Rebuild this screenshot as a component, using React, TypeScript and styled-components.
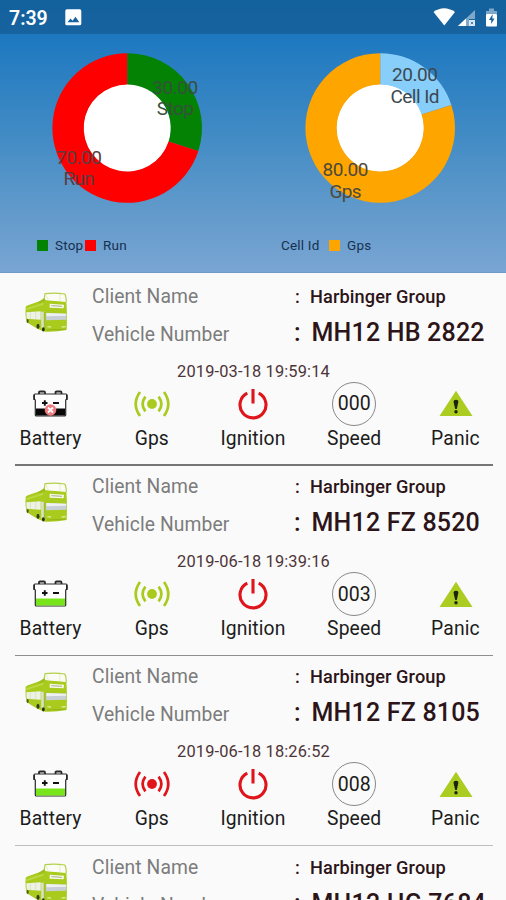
import React from "react";
import styled, { createGlobalStyle } from "styled-components";

const GlobalStyle = createGlobalStyle`
  * { box-sizing: border-box; }
  html, body { margin: 0; padding: 0; background: #fafafa; }
  body { font-family: Roboto, "Liberation Sans", sans-serif; overflow: hidden; }
  svg { display: block; }
`;

const Screen = styled.div`
  width: 506px;
  height: 900px;
  overflow: hidden;
  background: #fafafa;
`;

const StatusBar = styled.header`
  display: flex;
  align-items: center;
  height: 34px;
  padding: 0 8px 0 9px;
  background: linear-gradient(#13619c, #1763a0);
  color: #fff;
`;

const Clock = styled.span`
  width: 56px;
  font-size: 19.5px;
  font-weight: 600;
  line-height: 34px;
  padding-top: 3px;
`;

const StatusIcons = styled.div`
  display: flex;
  margin-left: auto;
`;

const Overview = styled.section`
  display: flex;
  height: 239px;
  background: linear-gradient(#1d78c0, #3d89c4 38%, #5d98ca 70%, #79a5d3);
  border-bottom: 1px solid #6c9cc6;
`;

const ChartPanel = styled.div`
  width: 253px;
`;

const Legend = styled.div<{ $inset: number }>`
  display: flex;
  align-items: center;
  height: 16px;
  margin-top: 3px;
  padding-left: ${(p) => p.$inset}px;
`;

const Swatch = styled.i<{ $color: string; $before: number }>`
  width: 11px;
  height: 11px;
  margin: 0 7px 0 ${(p) => p.$before}px;
  background: ${(p) => p.$color};
`;

const LegendLabel = styled.span<{ $width: number }>`
  width: ${(p) => p.$width}px;
  font-size: 13.5px;
  line-height: 16px;
  letter-spacing: 0.2px;
  white-space: nowrap;
  color: #16304e;
`;

const List = styled.main`
  padding-top: 2.7px;
`;

const Card = styled.article`
  height: 190.33px;
`;

const Info = styled.div`
  display: grid;
  grid-template-columns: 92px 202px 1fr;
  grid-template-rows: 34px 40px;
  padding-top: 4px;
`;

const BusCell = styled.div`
  grid-row: 1 / 3;
  padding: 12px 0 0 25px;
`;

const Field = styled.span<{ $lift?: number }>`
  font-size: 19.3px;
  font-weight: 400;
  line-height: 34px;
  letter-spacing: 0.1px;
  color: #7c7c7c;
  white-space: nowrap;
  padding-top: ${(p) => p.$lift ?? 0}px;
`;

const ClientValue = styled.div`
  display: flex;
  font-size: 18.2px;
  font-weight: 500;
  line-height: 34px;
  letter-spacing: 0.1px;
  color: #2c1418;
  white-space: nowrap;
`;

const VehicleValue = styled(ClientValue)`
  font-size: 25px;
  line-height: 38px;
  letter-spacing: 0.2px;
`;

const Colon = styled.span<{ $offset: number; $width: number }>`
  width: ${(p) => p.$width}px;
  padding-left: ${(p) => p.$offset}px;
`;

const Timestamp = styled.time`
  display: block;
  padding: 8px 0 0 1px;
  font-size: 16.4px;
  line-height: 20px;
  letter-spacing: 0.15px;
  text-align: center;
  color: #4d3438;
`;

const Metrics = styled.div`
  display: grid;
  grid-template-columns: repeat(5, 1fr);
`;

const Metric = styled.div`
  display: flex;
  flex-direction: column;
  align-items: center;
`;

const IconSlot = styled.div`
  display: flex;
  align-items: center;
  justify-content: center;
  height: 44px;
`;

const MetricLabel = styled.span`
  font-size: 19.3px;
  line-height: 26px;
  letter-spacing: 0.12px;
  color: #1c1c1c;
`;

const SpeedDial = styled.div`
  display: flex;
  align-items: center;
  justify-content: center;
  width: 44px;
  height: 44px;
  border: 1px solid #888;
  border-radius: 50%;
  font-size: 19.5px;
  color: #1c1c1c;
`;

const Divider = styled.hr<{ $color: string }>`
  height: 1.4px;
  margin: 12.5px 13px 0 15px;
  border: 0;
  background: ${(p) => p.$color};
`;

type Slice = {
  value: number;
  label: string;
  color: string;
  x: number;
  y: number;
  labelWidth: number;
  tint: string;
};

const CX = 127.2;
const CY = 94;

function slicePath(from: number, to: number) {
  const point = (fraction: number, r: number) => {
    const a = fraction * 2 * Math.PI;
    return `${CX + r * Math.sin(a)} ${CY - r * Math.cos(a)}`;
  };
  const large = to - from > 0.5 ? 1 : 0;
  return `M${point(from, 74.8)}A74.8 74.8 0 ${large} 1 ${point(to, 74.8)}L${point(to, 43.5)}A43.5 43.5 0 ${large} 0 ${point(from, 43.5)}Z`;
}

function Donut({ slices }: { slices: Slice[] }) {
  let start = 0;
  const arcs = slices.map((s) => {
    const from = start;
    start += s.value / 100;
    return <path key={s.label} d={slicePath(from, start)} fill={s.color} />;
  });
  return (
    <svg width="253" height="200" viewBox="0 0 253 200">
      <circle cx={CX} cy={CY} r="44" fill="#fff" />
      {arcs}
      {slices.map((s) => (
        <g key={s.label} fill={s.tint} fontSize="19" textAnchor="middle">
          <text x={s.x} y={s.y} textLength="46">{s.value.toFixed(2)}</text>
          <text x={s.x} y={s.y + 21.5} textLength={s.labelWidth}>{s.label}</text>
        </g>
      ))}
    </svg>
  );
}

function Bus() {
  return (
    <svg width="43" height="40" viewBox="75 48 129 120">
      <path d="M77 93Q78 90 84 88L131 71L199 76Q202 110 200 162Q170 168 137 167L128 165L112 158L80 139Q75 120 77 93Z" fill="#a9cb1d" />
      <path d="M132 72L135 53Q165 49 194 54Q198 58 199 78" fill="#fbfcf6" stroke="#b4d04a" strokeWidth="3.5" />
      <path d="M138 57L146 74M179 54L180 75" stroke="#dbe7b0" strokeWidth="2" />
      <path d="M112 80L133 66L137 74L120 82Z" fill="#9cbf1c" />
      <path d="M79 97L130 80V86L79 103Z" fill="#bcd944" />
      <path d="M149 83L192 86L191 97L149 95Z" fill="#f6f8ec" />
      <path d="M154 89L186 91" stroke="#98a26c" strokeWidth="2.5" />
      <path d="M79 109L122 106V131L80 128Z" fill="#eef2e6" />
      <path d="M91 108V129M107 107V130" stroke="#d2dfa4" strokeWidth="2" />
      <path d="M123 107L134 107V161L124 157Z" fill="#d9e2bd" />
      <path d="M133 108V163" stroke="#8aab20" strokeWidth="2.5" />
      <path d="M139 111L199 113V131L138 133Z" fill="#c9cfd6" />
      <path d="M139 111L199 113L198 119L139 121Z" fill="#eef0f3" />
      <path d="M142 152L153 153M185 153L197 152" stroke="#dcec8f" strokeWidth="4" />
      <path d="M141 162L197 160" stroke="#8fb117" strokeWidth="2.5" />
      <ellipse cx="114" cy="151" rx="4.5" ry="8" fill="#333b19" />
      <ellipse cx="83" cy="135" rx="3" ry="6" fill="#4c5623" />
      <ellipse cx="130" cy="160" rx="4" ry="6.5" fill="#252c14" />
    </svg>
  );
}

function BatteryIcon({ charged }: { charged: boolean }) {
  return (
    <svg width="35" height="28" viewBox="0 0 35 28">
      <path d="M6 4V2.4Q6 1.5 7 1.5H11Q12 1.5 12 2.4V4M22.5 4V2.4Q22.5 1.5 23.5 1.5H27.5Q28.5 1.5 28.5 2.4V4" fill="none" stroke="#292929" strokeWidth="1.8" />
      <path d="M2 4H33Q34 4 34 5V9L32.7 10V25Q32.7 26 31.5 26H3.5Q2.3 26 2.3 25V10L1 9V5Q1 4 2 4Z" fill="#fff" stroke="#292929" strokeWidth="1.2" />
      <path d="M1.2 10V5M33.8 10V5" stroke="#1d1d1d" strokeWidth="1.4" />
      <rect x="3" y="18.5" width="29" height="7" fill={charged ? "#78e51b" : "#080808"} />
      <path d="M9 13H14.5M11.8 10.3V15.7M20 13H26" stroke="#111" strokeWidth="1.9" />
      {!charged && (
        <>
          <circle cx="17.5" cy="20" r="5.8" fill="#f07b7f" />
          <path d="M15 17.5L20 22.5M20 17.5L15 22.5" stroke="#fff" strokeWidth="1.8" />
        </>
      )}
    </svg>
  );
}

function GpsIcon({ color }: { color: string }) {
  return (
    <svg width="36" height="28" viewBox="0 0 36 28" fill="none" stroke={color} strokeWidth="2.7">
      <circle cx="18" cy="14" r="4.9" fill={color} stroke="none" />
      <path d="M11.4 6.6Q5.8 14 11.4 21.4M24.6 6.6Q30.2 14 24.6 21.4M6 2Q-2.6 14 6 26M30 2Q38.6 14 30 26" />
    </svg>
  );
}

function PowerIcon() {
  return (
    <svg width="30" height="32" viewBox="0 0 30 32" fill="none" stroke="#e0141b" strokeWidth="3.1">
      <path d="M9.3 5.2A13 13 0 1 0 20.7 5.2M15 1V15.5" />
    </svg>
  );
}

function PanicIcon() {
  return (
    <svg width="35" height="27" viewBox="-0.5 0 34 27">
      <path d="M17 0.7L33.5 26H0.5Z" fill="#abcc20" />
      <path d="M14.5 11.7Q14.5 9.8 17 9.8Q19.5 9.8 19.3 12L17.8 19H16.2Z" fill="#1d230b" />
      <circle cx="17" cy="21.7" r="1.7" fill="#1d230b" />
    </svg>
  );
}

const fleet = [
  { plate: "MH12 HB 2822", time: "2019-03-18 19:59:14", charged: false, gps: "#a9cb1d", speed: "000", line: "#757575" },
  { plate: "MH12 FZ 8520", time: "2019-06-18 19:39:16", charged: true, gps: "#a9cb1d", speed: "003", line: "#8e8e8e" },
  { plate: "MH12 FZ 8105", time: "2019-06-18 18:26:52", charged: true, gps: "#e0141b", speed: "008", line: "#bdbdbd" },
  { plate: "MH12 HG 7684", time: "2019-06-18 18:20:31", charged: true, gps: "#a9cb1d", speed: "000", line: "#8e8e8e" },
];

const motion: Slice[] = [
  { value: 30, label: "Stop", color: "#048204", x: 175.3, y: 59.5, labelWidth: 37, tint: "#35513c" },
  { value: 70, label: "Run", color: "#ff0000", x: 79, y: 129.5, labelWidth: 31, tint: "#5c3b43" },
];

const source: Slice[] = [
  { value: 20, label: "Cell Id", color: "#87cefa", x: 162, y: 47, labelWidth: 49, tint: "#3c4850" },
  { value: 80, label: "Gps", color: "#ffa500", x: 92.5, y: 142, labelWidth: 32, tint: "#4e493b" },
];

export default function App() {
  return (
    <Screen>
      <GlobalStyle />
      <StatusBar>
        <Clock>7:39</Clock>
        <svg width="17" height="17" viewBox="0 0 17 17">
          <rect x="0.3" y="0.3" width="16" height="16" rx="1.6" fill="#fff" />
          <path d="M2.5 13.3L5.5 9.5L7.5 11.8L10.5 7.8L14.3 13.3Z" fill="#1763a0" />
        </svg>
        <StatusIcons>
          <svg width="65" height="20" viewBox="0 0 65 20">
            <path d="M0.5 5Q11 -2.5 22 5L11.3 18.5Z" fill="#fff" />
            <path d="M25 19L42 3V12H36V19Z" fill="#fff" opacity="0.45" />
            <path d="M25 19L33 11.5V19Z" fill="#fff" />
            <path d="M36 13H42V19H36Z" fill="#dce9f4" />
            <path d="M37.8 14.8L40.2 17.2M40.2 14.8L37.8 17.2" stroke="#4e82b0" strokeWidth="1" />
            <path d="M53 7V4H56V1.5H61V4H64V7Z" fill="#fff" opacity="0.45" />
            <rect x="53" y="7" width="11" height="12.5" rx="1" fill="#fff" />
            <path d="M59.7 7L56 13H58.2V17L61.5 11.5H59.3Z" fill="#1763a0" />
          </svg>
        </StatusIcons>
      </StatusBar>
      <Overview>
        <ChartPanel>
          <Donut slices={motion} />
          <Legend $inset={37}>
            <Swatch $color="#048204" $before={0} />
            <LegendLabel $width={30}>Stop</LegendLabel>
            <Swatch $color="#ff0000" $before={0} />
            <LegendLabel $width={26}>Run</LegendLabel>
          </Legend>
        </ChartPanel>
        <ChartPanel>
          <Donut slices={source} />
          <Legend $inset={28}>
            <LegendLabel $width={40}>Cell Id</LegendLabel>
            <Swatch $color="#ffa500" $before={8} />
            <LegendLabel $width={26}>Gps</LegendLabel>
          </Legend>
        </ChartPanel>
      </Overview>
      <List>
        {fleet.map((v) => (
          <Card key={v.plate}>
            <Info>
              <BusCell><Bus /></BusCell>
              <Field>Client Name</Field>
              <ClientValue>
                <Colon $offset={1} $width={16}>:</Colon>
                Harbinger Group
              </ClientValue>
              <Field $lift={4}>Vehicle Number</Field>
              <VehicleValue>
                <Colon $offset={-1} $width={17.5}>:</Colon>
                {v.plate}
              </VehicleValue>
            </Info>
            <Timestamp>{v.time}</Timestamp>
            <Metrics>
              <Metric>
                <IconSlot><BatteryIcon charged={v.charged} /></IconSlot>
                <MetricLabel>Battery</MetricLabel>
              </Metric>
              <Metric>
                <IconSlot><GpsIcon color={v.gps} /></IconSlot>
                <MetricLabel>Gps</MetricLabel>
              </Metric>
              <Metric>
                <IconSlot><PowerIcon /></IconSlot>
                <MetricLabel>Ignition</MetricLabel>
              </Metric>
              <Metric>
                <IconSlot><SpeedDial>{v.speed}</SpeedDial></IconSlot>
                <MetricLabel>Speed</MetricLabel>
              </Metric>
              <Metric>
                <IconSlot><PanicIcon /></IconSlot>
                <MetricLabel>Panic</MetricLabel>
              </Metric>
            </Metrics>
            <Divider $color={v.line} />
          </Card>
        ))}
      </List>
    </Screen>
  );
}
